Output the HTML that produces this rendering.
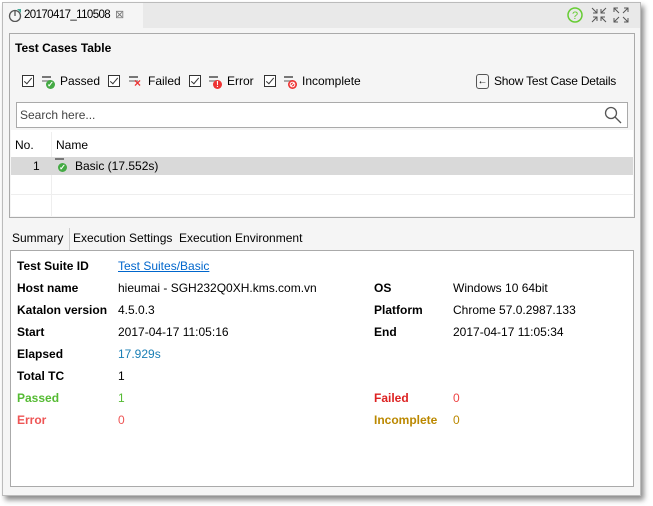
<!DOCTYPE html>
<html><head><style>
*{box-sizing:border-box;margin:0;padding:0}
body{width:653px;height:506px;background:#fff;font-family:"Liberation Sans",sans-serif;font-size:12px;color:#000;position:relative;overflow:hidden}
.win{position:absolute;left:2px;top:2px;width:639px;height:494px;background:#f5f5f5;border:1px solid #bbb;box-shadow:3px 4px 5px rgba(0,0,0,.45)}
.a{position:absolute;white-space:nowrap}
.b{font-weight:bold}
.cb{position:absolute;width:12px;height:12px;border:1px solid #333;background:#fff}
.cb:after{content:"";position:absolute;left:3px;top:0px;width:3px;height:7px;border:solid #333;border-width:0 1.5px 1.5px 0;transform:rotate(40deg)}
.lines{position:absolute;width:9px;height:6px;border-top:2px solid #777;border-bottom:2px solid #aaa}
.dot{position:absolute;width:9px;height:9px;border-radius:50%;color:#fff;font-size:8px;line-height:9px;text-align:center;font-weight:bold}
</style></head><body>
<div class="win">
<div class="a" style="left:0;top:0;width:637px;height:25px;background:#e9e9e9"></div>
<div class="a" style="left:0;top:0;width:140px;height:26px;background:#f5f5f5"></div>
<svg class="a" style="left:5px;top:5px" width="14" height="14"><circle cx="7" cy="8" r="5.5" fill="none" stroke="#555" stroke-width="1.3"/><path d="M7 8V2.5" stroke="#555" stroke-width="1.3"/><path d="M9 1l4 0 0 4z" fill="#4a9"/></svg>
<div class="a" style="left:21px;top:6px;font-size:11.5px;letter-spacing:-0.6px">20170417_110508</div>
<div class="a" style="left:112px;top:5px;color:#777;font-size:11px">⊠</div>
<svg class="a" style="left:564px;top:4px" width="16" height="16"><circle cx="8" cy="8" r="7" fill="none" stroke="#6c3" stroke-width="1.5"/><text x="8" y="12" font-size="11" text-anchor="middle" fill="#6c3" font-family="Liberation Sans">?</text></svg>
<svg class="a" style="left:588px;top:4px" width="16" height="16" stroke="#555" fill="none"><path d="M1 1l5 5M6 2v4H2M15 1l-5 5M10 2v4h4M1 15l5-5M2 10h4v4M15 15l-5-5M10 14v-4h4"/></svg>
<svg class="a" style="left:610px;top:4px" width="16" height="16" stroke="#555" fill="none"><path d="M1 1l5 5M1 5V1h4M15 1l-5 5M11 1h4v4M1 15l5-5M1 11v4h4M15 15l-5-5M15 11v4h-4"/></svg>

<div class="a" style="left:6px;top:30px;width:626px;height:185px;border:1px solid #aaa;background:#f5f5f5"></div>
<div class="a b" style="left:12px;top:38px">Test Cases Table</div>
<div class="cb" style="left:19px;top:72px"></div><div class="lines" style="left:39px;top:73px"></div><div class="dot" style="left:43px;top:77px;background:#4a4">✓</div><div class="a" style="left:57px;top:71px">Passed</div>
<div class="cb" style="left:105px;top:72px"></div><div class="lines" style="left:126px;top:73px"></div><div class="a" style="left:131px;top:73px;color:#e33;font-weight:bold;font-size:12px">×</div><div class="a" style="left:145px;top:71px">Failed</div>
<div class="cb" style="left:186px;top:72px"></div><div class="lines" style="left:206px;top:73px"></div><div class="dot" style="left:210px;top:77px;background:#e33">!</div><div class="a" style="left:224px;top:71px">Error</div>
<div class="cb" style="left:261px;top:72px"></div><div class="lines" style="left:281px;top:73px"></div><div class="dot" style="left:285px;top:77px;background:#e33">⊘</div><div class="a" style="left:299px;top:71px">Incomplete</div>
<div class="a" style="left:473px;top:71px;width:13px;height:15px;border:1px solid #555;border-radius:3px;font-size:10px;line-height:13px;text-align:center">←</div>
<div class="a" style="left:491px;top:71px;letter-spacing:-0.2px">Show Test Case Details</div>
<div class="a" style="left:13px;top:99px;width:612px;height:26px;border:1px solid #aaa;background:#fff"></div>
<div class="a" style="left:17px;top:105px;color:#444">Search here...</div>
<svg class="a" style="left:601px;top:103px" width="18" height="18" stroke="#555" fill="none" stroke-width="1.3"><circle cx="7" cy="7" r="5.5"/><path d="M11 11l6 6"/></svg>
<div class="a" style="left:8px;top:127px;width:622px;height:86px;background:#fff"></div>
<div class="a" style="left:48px;top:129px;width:1px;height:84px;background:#eee"></div>
<div class="a" style="left:12px;top:135px">No.</div><div class="a" style="left:53px;top:135px">Name</div>
<div class="a" style="left:8px;top:154px;width:622px;height:18px;background:#d9d9d9"></div>
<div class="a" style="left:30px;top:156px">1</div>
<div class="lines" style="left:52px;top:155px;border-bottom:none;height:3px"></div><div class="dot" style="left:55px;top:160px;background:#4a4">✓</div>
<div class="a" style="left:72px;top:156px">Basic (17.552s)</div>
<div class="a" style="left:8px;top:191px;width:622px;height:1px;background:#eee"></div>

<div class="a" style="left:6px;top:225px;width:61px;height:23px;border-right:1px solid #ccc"></div>
<div class="a" style="left:9px;top:228px">Summary</div>
<div class="a" style="left:70px;top:228px">Execution Settings</div>
<div class="a" style="left:176px;top:228px">Execution Environment</div>
<div class="a" style="left:7px;top:247px;width:624px;height:237px;border:1px solid #aaa;background:#fff"></div>

<div class="a b" style="left:14px;top:256px">Test Suite ID</div><div class="a" style="left:115px;top:256px;color:#06c;text-decoration:underline">Test Suites/Basic</div>
<div class="a b" style="left:14px;top:278px">Host name</div><div class="a" style="left:115px;top:278px">hieumai - SGH232Q0XH.kms.com.vn</div>
<div class="a b" style="left:371px;top:278px">OS</div><div class="a" style="left:450px;top:278px">Windows 10 64bit</div>
<div class="a b" style="left:14px;top:300px">Katalon version</div><div class="a" style="left:115px;top:300px">4.5.0.3</div>
<div class="a b" style="left:371px;top:300px">Platform</div><div class="a" style="left:450px;top:300px">Chrome 57.0.2987.133</div>
<div class="a b" style="left:14px;top:322px">Start</div><div class="a" style="left:115px;top:322px">2017-04-17 11:05:16</div>
<div class="a b" style="left:371px;top:322px">End</div><div class="a" style="left:450px;top:322px">2017-04-17 11:05:34</div>
<div class="a b" style="left:14px;top:344px">Elapsed</div><div class="a" style="left:115px;top:344px;color:#1a7fb5">17.929s</div>
<div class="a b" style="left:14px;top:366px">Total TC</div><div class="a" style="left:115px;top:366px">1</div>
<div class="a b" style="left:14px;top:388px;color:#5b3">Passed</div><div class="a" style="left:115px;top:388px;color:#5b3">1</div>
<div class="a b" style="left:371px;top:388px;color:#d22">Failed</div><div class="a" style="left:450px;top:388px;color:#e44">0</div>
<div class="a b" style="left:14px;top:410px;color:#e55">Error</div><div class="a" style="left:115px;top:410px;color:#e55">0</div>
<div class="a b" style="left:371px;top:410px;color:#b80">Incomplete</div><div class="a" style="left:450px;top:410px;color:#b80">0</div>
</div>
</body></html>
